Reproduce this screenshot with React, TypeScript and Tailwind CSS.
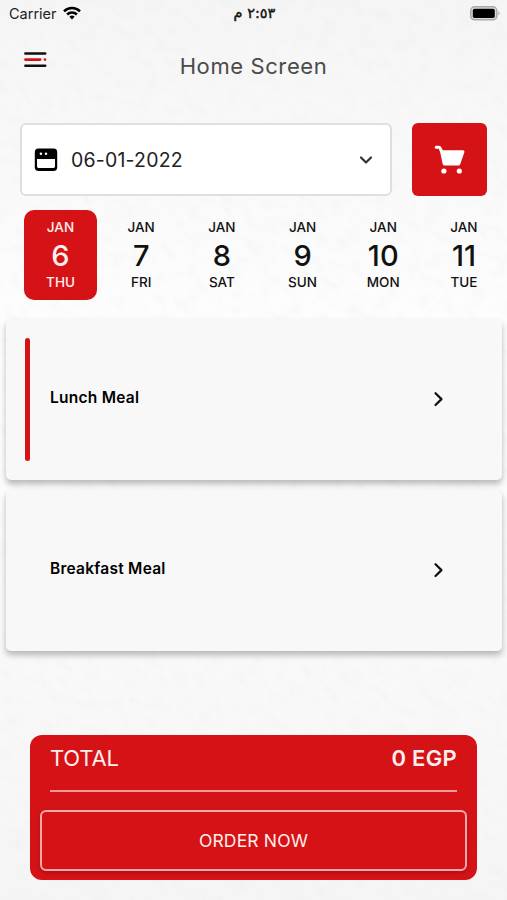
import { useState, FC } from 'react';

interface Day {
  month: string;
  date: string;
  weekday: string;
}

const days: Day[] = [
  { month: 'JAN', date: '6', weekday: 'THU' },
  { month: 'JAN', date: '7', weekday: 'FRI' },
  { month: 'JAN', date: '8', weekday: 'SAT' },
  { month: 'JAN', date: '9', weekday: 'SUN' },
  { month: 'JAN', date: '10', weekday: 'MON' },
  { month: 'JAN', date: '11', weekday: 'TUE' },
];

const meals = ['Lunch Meal', 'Breakfast Meal'];

// Paper-like grain behind the whole screen
const PaperTexture: FC = () => (
  <svg className="absolute inset-0 -z-10 h-full w-full opacity-20" aria-hidden="true">
    <filter id="grain" x="0" y="0" width="100%" height="100%">
      <feTurbulence type="fractalNoise" baseFrequency="0.06 0.1" numOctaves="2" seed="4" />
      <feColorMatrix values="0 0 0 0 0.83  0 0 0 0 0.83  0 0 0 0 0.83  3 0 0 0 -1.3" />
    </filter>
    <g transform="rotate(40 253 450)">
      <rect x="-350" y="-150" width="1200" height="1200" filter="url(#grain)" />
    </g>
  </svg>
);

const StatusBar: FC = () => (
  <div className="grid h-7 grid-cols-3 items-center pl-[9px] pr-[7px]">
    <div className="flex items-center gap-1.5 text-[14.5px] text-[#222]">
      <span>Carrier</span>
      <svg className="-mt-0.5" width="18" height="14" viewBox="0 0 18 14" fill="none" stroke="#000" strokeWidth="2.5">
        <path d="M1 5.3a11.5 11.5 0 0 1 16 0" />
        <path d="M4.1 8.5a7 7 0 0 1 9.8 0" />
        <path d="M9 13.4 6.4 10.8a3.8 3.8 0 0 1 5.2 0Z" fill="#000" stroke="none" />
      </svg>
    </div>
    <span
      dir="rtl"
      className="-mt-0.5 text-center font-['DejaVu_Sans',sans-serif] text-[14.5px] leading-none text-[#111] [-webkit-text-stroke:0.4px_#111]"
    >
      ٢:٥٣ م
    </span>
    <svg className="-mt-0.5 justify-self-end" width="30" height="15" viewBox="0 0 30 15">
      <rect x="0.8" y="0.8" width="26" height="13" rx="3.8" fill="#ddd" stroke="#aaa" strokeWidth="1.5" />
      <rect x="2.8" y="2.7" width="22" height="9.4" rx="1.8" fill="#000" />
      <path d="M28.3 5.2v4.2c1.7-.7 1.7-3.5 0-4.2Z" fill="#aaa" />
    </svg>
  </div>
);

const Header: FC = () => (
  <header className="grid h-[95px] grid-cols-[60px_1fr_60px] items-start pt-[22px]">
    <button className="ml-6 mt-[1px]" aria-label="Menu">
      <svg width="23" height="18" viewBox="0 0 23 18" strokeWidth="2.6" strokeLinecap="round">
        <path d="M1.4 2.5h19.8M1.4 14.7h19.8" stroke="#111" />
        <path d="M1.4 8.6h14.8M20.9 8.6h.1" stroke="#d41317" />
      </svg>
    </button>
    <h1 className="text-center text-[22px] leading-8 tracking-[0.6px] text-[#4a4a4a]">Home Screen</h1>
  </header>
);

const DateBar: FC = () => (
  <div className="flex gap-5 pl-5 pr-5">
    <button className="flex h-[73px] w-[372px] items-center rounded-md border-2 border-[#dfdfdf] bg-white pl-3 pr-[17px]">
      <svg width="24" height="24" viewBox="0 0 24 24">
        <rect x="0.8" y="0.5" width="22.4" height="22.4" rx="3.6" fill="#000" />
        <path d="M3 11h18v7.6a1.4 1.4 0 0 1-1.4 1.4H4.4A1.4 1.4 0 0 1 3 18.6Z" fill="#fff" />
        <circle cx="6.9" cy="5.7" r="1.25" fill="#fff" />
        <circle cx="12" cy="5.7" r="1.25" fill="#fff" />
      </svg>
      <span className="ml-[13px] mt-0.5 text-[19.5px] tracking-[0.2px] text-[#222]">06-01-2022</span>
      <svg className="ml-auto mt-px" width="14" height="10" viewBox="0 0 14 10" fill="none">
        <path d="m2 2.5 5 5 5-5" stroke="#333" strokeWidth="2.2" strokeLinecap="round" strokeLinejoin="round" />
      </svg>
    </button>
    <button
      className="flex h-[73px] w-[75px] items-center justify-center rounded-md bg-[#d51317]"
      aria-label="Cart"
    >
      <svg width="32" height="30" viewBox="0 0 32 30" fill="#fff">
        <path d="M2.2 2.2h2.6q1 0 1.4 1.2L7.4 6" fill="none" stroke="#fff" strokeWidth="3" strokeLinecap="round" />
        <path d="M5.8 5.2H28.8q2.2.2 1.5 2.4L26.2 19.3q-.4 1.200-1.6 1.200H10.4q-1.3 0-1.7-1.3Z" />
        <circle cx="9.9" cy="26" r="2.6" />
        <circle cx="25.3" cy="26" r="2.6" />
      </svg>
    </button>
  </div>
);

interface DayCardProps {
  day: Day;
  active: boolean;
  onSelect: () => void;
}

const DayCard: FC<DayCardProps> = ({ day, active, onSelect }) => (
  <button
    onClick={onSelect}
    className={`flex h-[90px] w-[73px] shrink-0 flex-col items-center rounded-[10px] pt-2 font-medium ${
      active ? 'bg-[#d51317] text-[#fff0ee]' : 'text-[#111]'
    }`}
  >
    <span className="text-[13.5px] leading-[18px]">{day.month}</span>
    <span className="pt-px text-[29px] leading-[37px]">{day.date}</span>
    <span className="text-[13.5px] leading-[16px]">{day.weekday}</span>
  </button>
);

interface MealCardProps {
  name: string;
  active: boolean;
  onSelect: () => void;
}

const MealCard: FC<MealCardProps> = ({ name, active, onSelect }) => (
  <button
    onClick={onSelect}
    className="flex h-[161px] w-full items-center rounded-[5px] bg-[#f8f8f8] pl-[19px] pr-[58px] shadow-[0_4px_6px_rgba(0,0,0,0.27)]"
  >
    <span className={`h-[123px] w-[5px] rounded-full ${active ? 'bg-[#d51317]' : ''}`} />
    <span className="mb-1 ml-5 text-[15.5px] font-semibold tracking-[0.25px] text-black">{name}</span>
    <svg className="mb-0.5 ml-auto" width="11" height="16" viewBox="0 0 11 16" fill="none">
      <path d="m2.5 2.2 6 5.9-6 5.9" stroke="#111" strokeWidth="2.2" strokeLinecap="round" strokeLinejoin="round" />
    </svg>
  </button>
);

const TotalPanel: FC = () => (
  <section className="mx-[30px] mt-[84px] h-[145px] rounded-xl bg-[#d51317] px-2.5 text-[#ffefed]">
    <div className="mx-2.5 flex h-[57px] items-start justify-between border-b-2 border-[#ee9a98] pt-2 text-[22px] leading-[30px]">
      <span className="tracking-[-0.2px]">TOTAL</span>
      <span className="font-semibold tracking-[0.3px]">0 EGP</span>
    </div>
    <button className="mt-[18px] flex h-[61px] w-full items-center justify-center rounded-md border-2 border-[#f2aaa8] pt-0.5 text-[17.5px] tracking-[0.15px] shadow-[0_2px_4px_rgba(80,0,0,0.3)]">
      ORDER NOW
    </button>
  </section>
);

const App: FC = () => {
  const [activeDay, setActiveDay] = useState(0);
  const [activeMeal, setActiveMeal] = useState(0);

  return (
    <main className="relative isolate h-[900px] w-[507px] overflow-hidden bg-linear-to-b from-[#f5f5f5] via-[#fefefe] via-40% to-[#f5f5f5] font-['Inter','Liberation_Sans',sans-serif]">
      <PaperTexture />
      <StatusBar />
      <Header />
      <DateBar />
      <div className="mt-3.5 flex gap-[7.7px] pl-6">
        {days.map((day, index) => (
          <DayCard
            key={day.date}
            day={day}
            active={index === activeDay}
            onSelect={() => setActiveDay(index)}
          />
        ))}
      </div>
      <div className="mt-[19px] flex flex-col gap-2.5 pl-1.5 pr-[5px]">
        {meals.map((meal, index) => (
          <MealCard
            key={meal}
            name={meal}
            active={index === activeMeal}
            onSelect={() => setActiveMeal(index)}
          />
        ))}
      </div>
      <TotalPanel />
    </main>
  );
};

export default App;
